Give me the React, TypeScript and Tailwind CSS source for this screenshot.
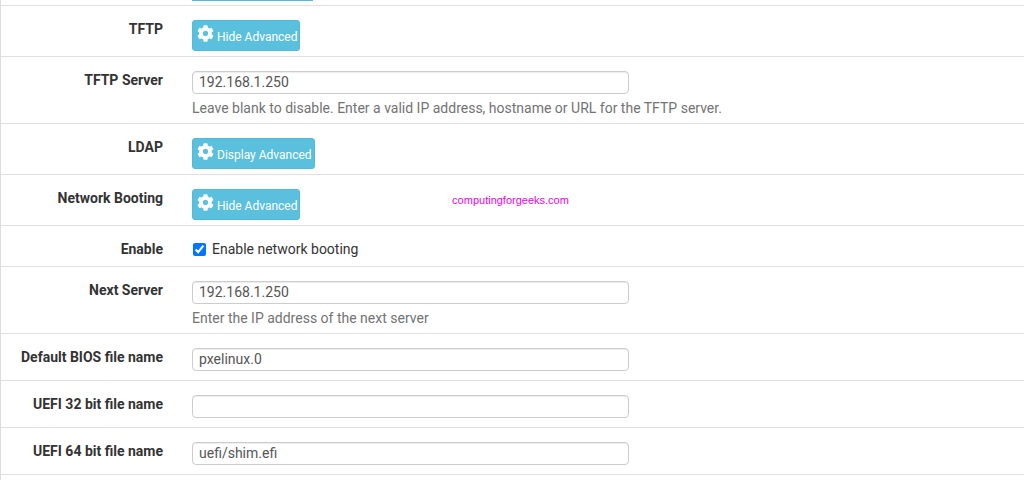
import React from 'react';
import { FaCog } from 'react-icons/fa';

interface RowProps {
  label: string;
  htmlFor: string;
  children: React.ReactNode;
}

function Row({ label, htmlFor, children }: RowProps) {
  return (
    <div className="grid grid-cols-[162px_1fr] gap-x-[29px] border-b border-[#e0e0e0] pt-[13px]">
      <label htmlFor={htmlFor} className="text-right font-bold text-[#333]">
        {label}
      </label>
      <div className="min-w-0">{children}</div>
    </div>
  );
}

interface AdvancedRowProps {
  label: string;
  id: string;
  text: string;
}

function AdvancedRow({ label, id, text }: AdvancedRowProps) {
  return (
    <Row label={label} htmlFor={id}>
      <button
        id={id}
        type="button"
        className="mt-px mb-[5px] flex h-[31px] items-center gap-[3px] rounded-[3px] border border-[#50bbdb] bg-[#5bc0de] pr-0.5 pl-1 text-xs text-white hover:bg-[#31b0d5]"
      >
        <FaCog className="mb-1 size-[17px]" />
        <span className="pt-0.5">{text}</span>
      </button>
    </Row>
  );
}

interface TextRowProps {
  label: string;
  id: string;
  value: string;
  help?: string;
}

function TextRow({ label, id, value, help }: TextRowProps) {
  return (
    <Row label={label} htmlFor={id}>
      <input
        id={id}
        type="text"
        defaultValue={value}
        className="mt-px block h-[23px] w-full max-w-[437px] rounded border border-[#ccc] bg-white px-1.5 pb-px text-[#555] shadow-[inset_0_1px_1px_rgba(0,0,0,0.075)] outline-none focus:border-[#66afe9]"
      />
      {help ? <p className="mt-1 mb-[5px] text-[#737373]">{help}</p> : <div className="h-[9px]" />}
    </Row>
  );
}

export default function App() {
  return (
    <div className="relative min-h-screen overflow-hidden border-l border-[#ddd] bg-white font-['Roboto',sans-serif] text-sm leading-5 text-[#333]">
      <div className="grid grid-cols-[162px_1fr] gap-x-[29px] border-b border-[#e0e0e0] pb-1">
        <div className="col-start-2 h-px w-[121px] bg-[#50bbdb]" />
      </div>
      <form onSubmit={(e) => e.preventDefault()}>
        <AdvancedRow label="TFTP" id="tftp" text="Hide Advanced" />
        <TextRow
          label="TFTP Server"
          id="tftp-server"
          value="192.168.1.250"
          help="Leave blank to disable. Enter a valid IP address, hostname or URL for the TFTP server."
        />
        <AdvancedRow label="LDAP" id="ldap" text="Display Advanced" />
        <AdvancedRow label="Network Booting" id="network-booting" text="Hide Advanced" />
        <Row label="Enable" htmlFor="enable">
          <label className="mb-[7px] flex items-center gap-1.5">
            <input
              id="enable"
              type="checkbox"
              defaultChecked
              className="ml-px size-[13px] accent-[#0075ff]"
            />
            Enable network booting
          </label>
        </Row>
        <TextRow
          label="Next Server"
          id="next-server"
          value="192.168.1.250"
          help="Enter the IP address of the next server"
        />
        <TextRow label="Default BIOS file name" id="bios-file" value="pxelinux.0" />
        <TextRow label="UEFI 32 bit file name" id="uefi32-file" value="" />
        <TextRow label="UEFI 64 bit file name" id="uefi64-file" value="uefi/shim.efi" />
      </form>
      <span className="pointer-events-none absolute inset-x-0 top-[190px] pr-1 text-center font-['Liberation_Sans',sans-serif] text-[11px] text-[#ee00ee]">
        computingforgeeks.com
      </span>
    </div>
  );
}
